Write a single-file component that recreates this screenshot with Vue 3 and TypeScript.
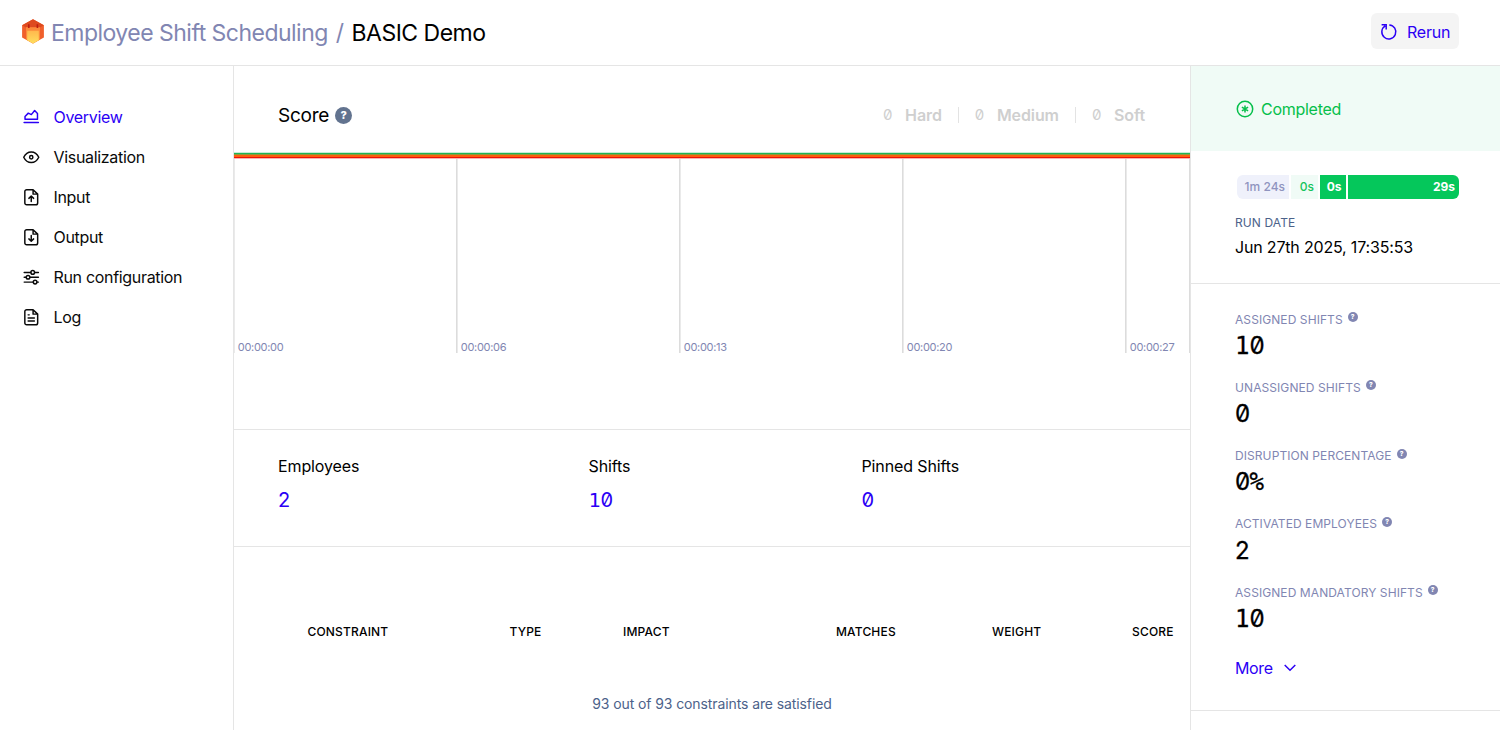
<script setup lang="ts">
interface NavItem { label: string; icon: string; active?: boolean }
interface Metric { label: string; value: string }

const nav: NavItem[] = [
  { label: 'Overview', icon: 'chart', active: true },
  { label: 'Visualization', icon: 'eye' },
  { label: 'Input', icon: 'input' },
  { label: 'Output', icon: 'output' },
  { label: 'Run configuration', icon: 'sliders' },
  { label: 'Log', icon: 'log' },
]
const scores: string[] = ['Hard', 'Medium', 'Soft']
const ticks: string[] = ['00:00:00', '00:00:06', '00:00:13', '00:00:20', '00:00:27']
const counts: Metric[] = [
  { label: 'Employees', value: '2' },
  { label: 'Shifts', value: '10' },
  { label: 'Pinned Shifts', value: '0' },
]
const columns: string[] = ['Constraint', 'Type', 'Impact', 'Matches', 'Weight', 'Score']
const metrics: Metric[] = [
  { label: 'Assigned shifts', value: '10' },
  { label: 'Unassigned shifts', value: '0' },
  { label: 'Disruption percentage', value: '0%' },
  { label: 'Activated employees', value: '2' },
  { label: 'Assigned mandatory shifts', value: '10' },
]
</script>

<template>
  <div class="app">
    <header class="header">
      <svg class="logo" viewBox="0 0 22 25">
        <defs>
          <linearGradient id="face" x1="0" y1="0" x2="0" y2="1">
            <stop offset="0" stop-color="#ffb84d" />
            <stop offset="1" stop-color="#ffdf5e" />
          </linearGradient>
        </defs>
        <path d="M11 0.3 21.9 6.3V18.4L11 24.6 0.1 18.4V6.3Z" fill="#f0602c" />
        <path d="M11 0.3 21.9 6.3 18 8.6H4L0.1 6.3Z" fill="#de4a1f" />
        <path d="M4 8.2H18V20.6L11 24.6 4 20.6Z" fill="#fb8a3a" />
        <path d="M5.2 11.8H16.8V21.3L11 24.6 5.2 21.3Z" fill="url(#face)" />
        <path d="M6 5.2h1.6v3.9H6zM14.6 5.2h1.6v3.9h-1.6z" fill="#bd1d10" />
      </svg>
      <h1 class="title"><span class="crumb">Employee Shift Scheduling</span><span class="slash">/</span><span class="run">BASIC Demo</span></h1>
      <button class="rerun" type="button">
        <svg class="rerun-icon" viewBox="0 0 18 18">
          <path d="M9.3 1.9A7 7 0 1 1 5.2 2.9M1.6 1.8H6.2V6.4" />
        </svg>
        <span>Rerun</span>
      </button>
    </header>

    <div class="body">
      <nav class="nav">
        <a v-for="item in nav" :key="item.label" class="nav-item" :class="{ active: item.active }">
          <svg class="nav-icon" viewBox="0 0 18 18">
            <template v-if="item.icon === 'chart'">
              <path d="M2.2 12.3V9.3L5.8 5.6 9.1 7.2 12.7 2.8 15.8 6V12.3ZM1.2 15.8H16.8" />
            </template>
            <template v-else-if="item.icon === 'eye'">
              <path d="M0.8 9C2.7 5 5.6 3.2 9 3.2S15.3 5 17.2 9C15.3 13 12.4 14.8 9 14.8S2.7 13 0.8 9Z" />
              <circle cx="9" cy="9" r="1.8" />
            </template>
            <template v-else-if="item.icon === 'sliders'">
              <path d="M1.3 3.7H8.4M12.8 3.7H16.8M1.3 9H3.3M7.7 9H16.8M1.3 14.3H11M15.4 14.3H16.8" />
              <circle cx="10.6" cy="3.7" r="2" /><circle cx="5.5" cy="9" r="2" /><circle cx="13.2" cy="14.3" r="2" />
            </template>
            <template v-else>
              <path d="M11 0.8H4A2 2 0 0 0 2 2.8V15.2A2 2 0 0 0 4 17.2H14A2 2 0 0 0 16 15.2V5.6L11 0.8V5.6H16" />
              <path v-if="item.icon === 'input'" d="M9 13.6V7.8M6.4 10.2 9 7.7 11.6 10.2" />
              <path v-else-if="item.icon === 'output'" d="M9 7.2V13.2M6.4 10.8 9 13.3 11.6 10.8" />
              <path v-else d="M5.6 6.4H6.8M5.6 9.8H12.4M5.6 13.2H12.4" />
            </template>
          </svg>
          <span>{{ item.label }}</span>
        </a>
      </nav>

      <main class="main">
        <section class="score">
          <div class="score-head">
            <h2 class="score-title">Score</h2>
            <span class="help">?</span>
            <ul class="score-list">
              <li v-for="s in scores" :key="s"><span class="digit"><span class="zero">0</span></span><b>{{ s }}</b></li>
            </ul>
          </div>
          <svg class="chart" viewBox="0 0 956 202" width="956" height="202">
            <g class="grid">
              <rect v-for="(t, i) in ticks" :key="t" :x="i * 223 - 1" y="0" width="1.6" height="201" />
              <rect x="955" y="1" width="1" height="200" />
            </g>
            <rect x="0" y="0" width="956" height="1" fill="#c8ecd6" />
            <rect x="0" y="1" width="956" height="1" fill="#1fb455" />
            <rect x="0" y="2" width="956" height="1" fill="#8f9a3c" />
            <rect x="0" y="3" width="956" height="2" fill="#fd5f0d" />
            <rect x="0" y="5" width="956" height="1" fill="#ee1208" />
            <rect x="0" y="6" width="956" height="1" fill="#f9b5b0" />
            <text v-for="(t, i) in ticks" :key="t" class="tick" :x="i * 223 + 3.8" y="199">{{ t }}</text>
          </svg>
        </section>

        <section class="counts">
          <div v-for="c in counts" :key="c.label">
            <div class="count-label">{{ c.label }}</div>
            <div class="count-value"><span v-for="(ch, i) in c.value" :key="i" :class="{ zero: ch === '0' || ch === '2' }">{{ ch }}</span></div>
          </div>
        </section>

        <section class="constraints">
          <div class="columns"><span v-for="c in columns" :key="c">{{ c }}</span></div>
          <p class="satisfied">93 out of 93 constraints are satisfied</p>
        </section>
      </main>

      <aside class="aside">
        <div class="status">
          <svg class="status-icon" viewBox="0 0 18 18">
            <circle cx="9" cy="9" r="7.7" />
            <path d="M9 5.4V12.6M5.9 7.2 12.1 10.8M5.9 10.8 12.1 7.2" />
          </svg>
          <span>Completed</span>
        </div>
        <div class="timing">
          <div class="phases">
            <span class="phase queued">1m 24s</span>
            <span class="phase starting">0s</span>
            <span class="phase init">0s</span>
            <span class="phase solving">29s</span>
          </div>
          <div class="date-label">Run date</div>
          <div class="date">Jun 27th 2025, 17:35:53</div>
        </div>
        <div class="metrics">
          <div v-for="m in metrics" :key="m.label" class="metric">
            <div class="metric-label"><span>{{ m.label }}</span><i class="help small">?</i></div>
            <div class="metric-value"><span v-for="(ch, i) in m.value" :key="i" :class="{ zero: ch === '0' || ch === '2' }">{{ ch }}</span></div>
          </div>
          <div class="more">
            <span>More</span>
            <svg class="chevron" viewBox="0 0 12 8"><path d="M0.7 1 6 6.2 11.3 1" /></svg>
          </div>
        </div>
      </aside>
    </div>
  </div>
</template>

<style>
body { overflow: hidden; background: #fff; }
</style>

<style scoped>
* { box-sizing: border-box; }
.app {
  width: 1500px;
  height: 730px;
  overflow: hidden;
  display: flex;
  flex-direction: column;
  font-family: Inter, "Liberation Sans", sans-serif;
  font-size: 16px;
  color: #000;
  background: #fff;
}
h1, h2, ul, p { margin: 0; padding: 0; font-weight: 400; }
svg { display: block; flex: none; }

.header {
  height: 66px;
  flex: none;
  display: flex;
  align-items: center;
  padding: 0 41px 2px 22px;
  border-bottom: 1px solid #e5e5e5;
}
.logo { width: 22px; height: 25px; }
.title { margin-left: 7px; padding-top: 2px; font-size: 23px; line-height: 32px; white-space: nowrap; letter-spacing: -0.52px; }
.crumb { color: #8186b2; }
.slash { color: #8186b2; margin: 0 8px; }
.rerun {
  margin: 0 0 1px auto;
  width: 88px;
  height: 36px;
  padding: 2px 0 0 9px;
  display: flex;
  align-items: center;
  gap: 9px;
  border: 0;
  border-radius: 6px;
  background: #f4f4f4;
  color: #2b00f5;
  font: inherit;
  letter-spacing: -0.2px;
}
.rerun-icon { width: 18px; height: 18px; fill: none; stroke: currentColor; stroke-width: 1.5; }

.body { flex: 1; display: flex; min-height: 0; }
.nav { width: 234px; flex: none; border-right: 1px solid #e5e5e5; padding: 30.6px 0 0 23px; letter-spacing: -0.32px; }
.nav-item { height: 40.15px; display: flex; align-items: center; gap: 14px; color: #0a0a0a; }
.nav-item.active { color: #2b00f5; }
.nav-icon { width: 16.5px; height: 16.5px; overflow: visible; fill: none; stroke: currentColor; stroke-width: 1.6; stroke-linejoin: round; stroke-linecap: round; }

.main { width: 957px; flex: none; border-right: 1px solid #e5e5e5; }
.score { height: 364px; border-bottom: 1px solid #e5e5e5; }
.score-head { height: 86px; padding: 13px 45px 0 44px; display: flex; align-items: center; }
.score-title { font-size: 19px; line-height: 26px; letter-spacing: -0.25px; }
.help {
  width: 17px;
  height: 17px;
  margin-left: 6px;
  border-radius: 50%;
  background: #62738f;
  color: #fff;
  font-size: 11px;
  line-height: 17px;
  font-weight: 800;
  font-style: normal;
  text-align: center;
}
.score-list { margin-left: auto; padding-bottom: 1px; display: flex; align-items: center; list-style: none; color: #cfcfcf; }
.score-list li { display: flex; align-items: center; line-height: 16px; }
.score-list li + li { margin-left: 16px; padding-left: 16px; border-left: 1px solid #e3e3e3; }
.score-list b { font-weight: 600; margin-left: 13px; letter-spacing: -0.1px; }
.digit { font-size: 15px; }
.zero { font-family: Inter, sans-serif; font-feature-settings: "zero" 1; letter-spacing: -0.025em; }
.grid { fill: #dcdcdc; }
.tick { font-size: 11px; fill: #8186b2; letter-spacing: -0.3px; }

.counts {
  height: 117px;
  padding: 24px 0 0 44px;
  display: grid;
  grid-template-columns: 310.5px 273px auto;
  border-bottom: 1px solid #e5e5e5;
}
.count-label { line-height: 24px; letter-spacing: -0.12px; }
.count-value { margin-top: 7px; line-height: 30px; font-family: "DejaVu Sans Mono", monospace; font-size: 20px; color: #2b00f5; }

.constraints { padding-top: 76px; }
.columns {
  padding-left: 73.5px;
  display: grid;
  grid-template-columns: 202px 113.5px 213px 156px 140px auto;
  font-size: 12px;
  line-height: 17px;
  font-weight: 500;
  letter-spacing: 0.17px;
  text-transform: uppercase;
}
.satisfied { margin-top: 54px; text-align: center; font-size: 14px; line-height: 20px; letter-spacing: -0.1px; color: #4c628a; }

.aside { flex: 1; min-width: 0; }
.status { height: 85px; padding-left: 45px; display: flex; align-items: center; gap: 7px; background: #f0fbf6; color: #06bf4b; letter-spacing: -0.27px; }
.status-icon { width: 18px; height: 18px; fill: none; stroke: currentColor; stroke-width: 1.5; }
.timing { height: 133px; padding: 24px 0 0 44px; border-bottom: 1px solid #e5e5e5; }
.phases { width: 222px; margin-left: 2px; height: 24px; display: flex; gap: 2px; border-radius: 6px; overflow: hidden; font-size: 12px; line-height: 24px; font-weight: 500; }
.phase { text-align: right; padding-right: 4px; white-space: nowrap; }
.queued { width: 52px; background: #eff1fb; color: #8f94bf; }
.starting { width: 27px; background: #f0fbf6; color: #16c45d; }
.init { width: 25.5px; background: #05c75b; color: #fff; font-weight: 700; }
.solving { flex: 1; background: #05c75b; color: #fff; font-weight: 700; }
.date-label { margin-top: 16px; font-size: 12px; line-height: 16px; letter-spacing: 0.1px; color: #4c628a; text-transform: uppercase; }
.date { margin-top: 4px; line-height: 24px; letter-spacing: -0.18px; }
.metrics { height: 427px; padding: 27.6px 0 0 44px; border-bottom: 1px solid #e5e5e5; }
.metric { height: 68.3px; }
.metric-label { display: flex; align-items: flex-start; font-size: 12px; line-height: 16px; letter-spacing: 0.08px; color: #8186b2; text-transform: uppercase; }
.help.small { width: 10px; height: 10px; margin: 0.5px 0 0 5px; font-size: 6.5px; line-height: 10px; background: #8186b2; letter-spacing: 0; }
.metric-value { margin-top: 2.2px; line-height: 32px; font-family: "DejaVu Sans Mono", monospace; font-size: 24px; -webkit-text-stroke: 0.3px currentColor; }
.more { margin-top: 3.2px; display: flex; align-items: center; gap: 11px; line-height: 24px; letter-spacing: -0.35px; color: #2b00f5; }
.chevron { width: 12px; height: 8px; fill: none; stroke: currentColor; stroke-width: 1.5; }
</style>
